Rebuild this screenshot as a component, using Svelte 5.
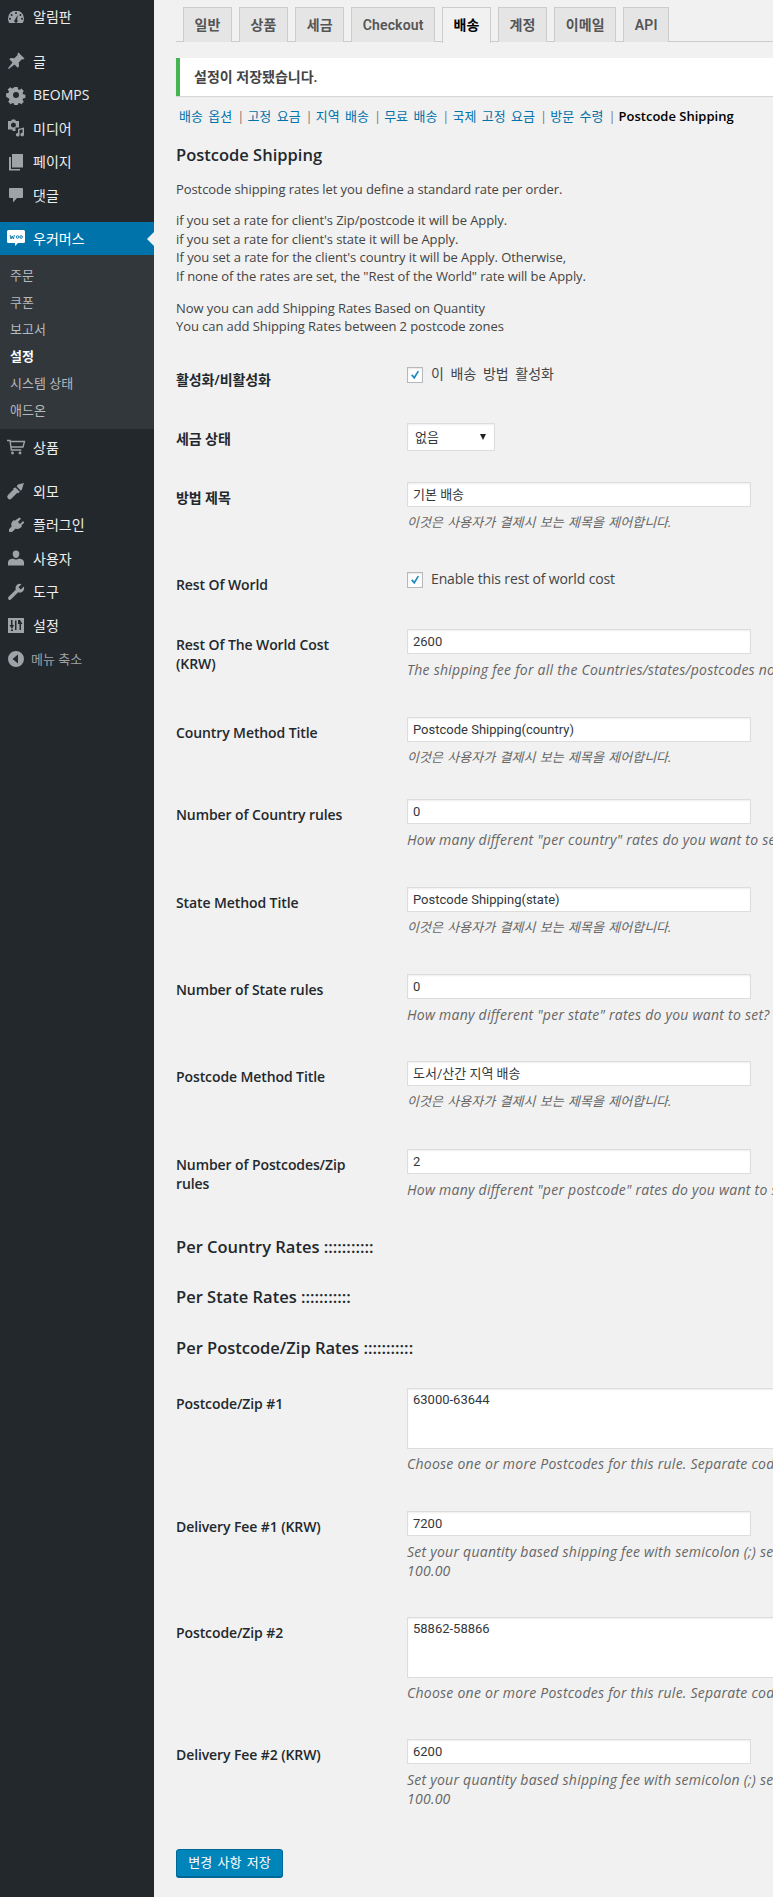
<script lang="ts">
	const tabs = ['일반', '상품', '세금', 'Checkout', '배송', '계정', '이메일', 'API'];
	const sections = ['배송 옵션', '고정 요금', '지역 배송', '무료 배송', '국제 고정 요금', '방문 수령'];
	const submenu = ['주문', '쿠폰', '보고서', '설정', '시스템 상태', '애드온'];

	const titleDesc = '이것은 사용자가 결제시 보는 제목을 제어합니다.';
	const codesDesc = 'Choose one or more Postcodes for this rule. Separate codes with a comma';
	const feeDesc = 'Set your quantity based shipping fee with semicolon (;) separated values';

	const topRows = [
		{ label: '활성화/비활성화', kind: 'check', ko: true, text: '이 배송 방법 활성화', pad: 'p34' },
		{ label: '세금 상태', kind: 'select', value: '없음', pad: 'p31' },
		{ label: '방법 제목', kind: 'input', value: '기본 배송', desc: titleDesc, pad: 'p40' },
		{ label: 'Rest Of World', kind: 'check', text: 'Enable this rest of world cost', pad: 'p35' },
		{ label: 'Rest Of The World Cost (KRW)', kind: 'input', value: '2600', desc: 'The shipping fee for all the Countries/states/postcodes not defined', pad: 'p38' },
		{ label: 'Country Method Title', kind: 'input', value: 'Postcode Shipping(country)', desc: titleDesc, pad: 'p32' },
		{ label: 'Number of Country rules', kind: 'input', value: '0', desc: 'How many different "per country" rates do you want to set?', pad: 'p38' },
		{ label: 'State Method Title', kind: 'input', value: 'Postcode Shipping(state)', desc: titleDesc, pad: 'p37' },
		{ label: 'Number of State rules', kind: 'input', value: '0', desc: 'How many different "per state" rates do you want to set?', pad: 'p37' },
		{ label: 'Postcode Method Title', kind: 'input', value: '도서/산간 지역 배송', desc: titleDesc, pad: 'p38' },
		{ label: 'Number of Postcodes/Zip rules', kind: 'input', value: '2', desc: 'How many different "per postcode" rates do you want to set?', pad: 'p38' }
	];

	const zipRows = [
		{ label: 'Postcode/Zip #1', kind: 'area', value: '63000-63644', desc: codesDesc, pad: 'p38' },
		{ label: 'Delivery Fee #1 (KRW)', kind: 'input', value: '7200', desc: feeDesc, wrapped: '100.00', pad: 'p37' },
		{ label: 'Postcode/Zip #2', kind: 'area', value: '58862-58866', desc: codesDesc, pad: 'p37' },
		{ label: 'Delivery Fee #2 (KRW)', kind: 'input', value: '6200', desc: feeDesc, wrapped: '100.00', pad: 'p41' }
	];
</script>

{#snippet icon(name)}
	<svg class="ico" viewBox="0 0 20 20" aria-hidden="true">
		{#if name === 'dashboard'}
			<path d="M10 3.500a8 8 0 0 0-8 8c0 1.600.5 3.200 1.300 4.400h13.400a8 8 0 0 0 1.300-4.400 8 8 0 0 0-8-8zm0 1.600a1 1 0 1 1 0 2 1 1 0 0 1 0-2zM5.600 7a1 1 0 1 1 0 2 1 1 0 0 1 0-2zm8.800 0a1 1 0 1 1 0 2 1 1 0 0 1 0-2zM4 10.800a1 1 0 1 1 0 2 1 1 0 0 1 0-2zm12 0a1 1 0 1 1 0 2 1 1 0 0 1 0-2zM11.700 8l-.6 4.700a1.700 1.700 0 1 1-2.200 0z" fill-rule="evenodd"/>
		{:else if name === 'pin'}
			<path d="M12.500 1.500l6 6-1.300 1.100-1.300-.3-3.200 3.300.3 3.800-1.300 1.300-3.200-3.200L2.800 18l-.8-.8 4.500-5.700-3.200-3.200L4.600 7l3.800.3 3.300-3.200-.3-1.300z"/>
		{:else if name === 'gear'}
			<path fill-rule="evenodd" d="M8.300 2h3.400l.4 2.300 1.300.6 2-1.300 2.400 2.400-1.300 2 .6 1.300 2.300.4v3.400l-2.300.4-.6 1.300 1.300 2-2.400 2.400-2-1.300-1.300.6-.4 2.300H8.300l-.4-2.300-1.300-.6-2 1.300-2.400-2.400 1.300-2-.6-1.300L.1 11.700V8.300l2.300-.4.6-1.300-1.300-2L4.100 2.200l2 1.300 1.300-.6zM10 7a3 3 0 1 0 0 6 3 3 0 0 0 0-6z"/>
		{:else if name === 'media'}
			<path fill-rule="evenodd" d="M2 3h3l1-1.500h3L10 3h3v6.500H9.500V13H6.500v-1.500H2zM7.500 4.500a2.500 2.500 0 1 0 0 5 2.500 2.500 0 0 0 0-5z"/>
			<path d="M12 11l6-1.500v7a1.800 1.800 0 1 1-1.500-1.700v-3.500l-3 .8v4.600a1.800 1.800 0 1 1-1.500-1.700z"/>
		{:else if name === 'page'}
			<path d="M6 2h11v13.500H6z"/><path d="M3 5h2v12h9v1.500H3z"/>
		{:else if name === 'comment'}
			<path d="M4 3h12a1 1 0 0 1 1 1v8a1 1 0 0 1-1 1h-5l-4 4.500V13H4a1 1 0 0 1-1-1V4a1 1 0 0 1 1-1z"/>
		{:else if name === 'cart'}
			<path fill="none" stroke="currentColor" stroke-width="1.400" d="M1 3.500h3l1.300 9.500h10M4.500 4.500h14l-1.500 5.500H5.200"/>
			<circle cx="6.500" cy="16" r="1.400"/><circle cx="14" cy="16" r="1.400"/>
		{:else if name === 'brush'}
			<path d="M12 3.500c2-.5 4-1 6-1.500-1 2.500-1.500 4.500-2 6.500l-1.200 1.200-4.200-4.500zM9.500 6.500l4.300 4.300-1.500 1.500-1-.5-5.800 5.700a1.500 1.500 0 0 1-3.500-3.500l5.700-5.800-.5-1z"/>
		{:else if name === 'plug'}
			<path d="M13.500 2.500l1.500 1.300-3 3.200 2 2 3-3 1.300 1.500-3 3 .8.800-1.300 1.300c-1.500 1.500-3.500 1.800-5 .8L6 17H3.500L3 16.500v-2.300l2.800-3c-1-1.500-.7-3.500.8-5L7.900 4.900l.8.800z"/>
		{:else if name === 'user'}
			<path d="M10 2.500a3.300 3.300 0 0 1 3.300 3.500c0 2-1.300 4-3.300 4S6.700 8 6.700 6A3.300 3.300 0 0 1 10 2.500zM7 10.500c.8.700 1.900 1 3 1s2.200-.3 3-1c2.500.3 5 1.500 5 3.500v3.500H2V14c0-2 2.500-3.200 5-3.500z"/>
		{:else if name === 'wrench'}
			<path d="M17.800 4.500c.7 1.600.4 3.500-.9 4.800a4.400 4.400 0 0 1-4.700 1l-7.300 7.300a1.800 1.800 0 0 1-2.500-2.500l7.300-7.300a4.400 4.400 0 0 1 5.800-5.600l-3 3 2.300 2.300z"/>
		{:else if name === 'sliders'}
			<path fill-rule="evenodd" d="M2 3h16v15H2zM5 5v5H3.500L6 14l2-4H6.500V5zm7 0v4h1.500v6H15V9h1.500L14 5zM9 5.500V15h1.500V5.500zM5 14.500V16h2v-1.500z"/>
		{:else if name === 'collapse'}
			<path fill-rule="evenodd" d="M10 2a8 8 0 1 1 0 16 8 8 0 0 1 0-16zm2 3.500L6.500 10l5.500 4.500z"/>
		{/if}
	</svg>
{/snippet}

{#snippet row(r)}
	<div class="row {r.pad}">
		<div class="label" class:check-label={r.kind === 'check'}>{r.label}</div>
		<div class="field">
			{#if r.kind === 'check'}
				<label class="check" class:ko={r.ko}>
					<span class="box">
						<svg viewBox="0 0 16 16" aria-hidden="true"><path d="M3.500 8.500l1.500-1.300 2 2.300 4-6.500 1.600 1L7.300 12.800z"/></svg>
					</span>
					{r.text}
				</label>
			{:else if r.kind === 'select'}
				<div class="select">{r.value}<span class="caret"></span></div>
			{:else if r.kind === 'area'}
				<div class="area">{r.value}</div>
			{:else}
				<div class="input">{r.value}</div>
			{/if}
			{#if r.desc}
				<p class="desc" class:ko={r.desc === titleDesc} class:tight={r.kind === 'area'}>{r.desc}{#if r.wrapped}<br />{r.wrapped}{/if}</p>
			{/if}
		</div>
	</div>
{/snippet}

<div class="admin">
	<nav class="menu">
		<a class="item">{@render icon('dashboard')}알림판</a>
		<div class="sep"></div>
		<a class="item">{@render icon('pin')}글</a>
		<a class="item">{@render icon('gear')}BEOMPS</a>
		<a class="item">{@render icon('media')}미디어</a>
		<a class="item">{@render icon('page')}페이지</a>
		<a class="item">{@render icon('comment')}댓글</a>
		<div class="sep short"></div>
		<a class="item current">
			<svg class="ico woo" viewBox="0 0 20 20" aria-hidden="true">
				<path d="M2.500 2h15A1.500 1.500 0 0 1 19 3.500v10a1.500 1.500 0 0 1-1.500 1.500H12l-3 3v-3H2.500A1.500 1.500 0 0 1 1 13.500v-10A1.500 1.500 0 0 1 2.500 2z" />
				<path class="woo-mark" d="M4 7l1 4 1.200-3 1.200 3 1-4M10.300 9a1.300 1.300 0 1 0 2.600 0 1.300 1.300 0 1 0-2.600 0M13.800 9a1.300 1.300 0 1 0 2.600 0 1.300 1.300 0 1 0-2.600 0" />
			</svg>
			우커머스
		</a>
		<div class="sub">
			{#each submenu as s}
				<a class:on={s === '설정'}>{s}</a>
			{/each}
		</div>
		<div class="sep tiny"></div>
		<a class="item">{@render icon('cart')}상품</a>
		<div class="sep wide"></div>
		<a class="item">{@render icon('brush')}외모</a>
		<a class="item">{@render icon('plug')}플러그인</a>
		<a class="item">{@render icon('user')}사용자</a>
		<a class="item">{@render icon('wrench')}도구</a>
		<a class="item">{@render icon('sliders')}설정</a>
		<a class="item collapse">{@render icon('collapse')}메뉴 축소</a>
	</nav>

	<main class="content">
		<div class="tabs">
			{#each tabs as t}
				<a class="tab" class:active={t === '배송'}>{t}</a>
			{/each}
		</div>

		<div class="notice">설정이 저장됐습니다.</div>

		<div class="subnav">
			{#each sections as s}
				<a>{s}</a><span class="bar">|</span>
			{/each}
			<strong>Postcode Shipping</strong>
		</div>

		<h2>Postcode Shipping</h2>
		<p class="intro first">Postcode shipping rates let you define a standard rate per order.</p>
		<p class="intro">
			if you set a rate for client's Zip/postcode it will be Apply.<br />
			if you set a rate for client's state it will be Apply.<br />
			If you set a rate for the client's country it will be Apply. Otherwise,<br />
			If none of the rates are set, the "Rest of the World" rate will be Apply.
		</p>
		<p class="intro">
			Now you can add Shipping Rates Based on Quantity<br />
			You can add Shipping Rates between 2 postcode zones
		</p>

		<div class="rows">
			{#each topRows as r}
				{@render row(r)}
			{/each}
		</div>

		<h3>Per Country Rates :::::::::::</h3>
		<h3>Per State Rates :::::::::::</h3>
		<h3>Per Postcode/Zip Rates :::::::::::</h3>

		{#each zipRows as r}
			{@render row(r)}
		{/each}

		<button class="save">변경 사항 저장</button>
	</main>
</div>

<style>
	:global(body) {
		background: #f1f1f1;
	}

	.admin {
		display: flex;
		width: 773px;
		height: 1897px;
		overflow: hidden;
		background: #f1f1f1;
		color: #444;
		font-family: 'Open Sans', 'Noto Sans CJK KR', sans-serif;
		font-size: 13px;
		line-height: 18.6px;
	}

	.menu {
		flex: none;
		width: 154px;
		background: #23282d;
		color: #eee;
		font-size: 14px;
	}

	.item {
		display: flex;
		align-items: center;
		box-sizing: border-box;
		height: 33.5px;
		padding: 1.5px 0 0 6px;
	}

	.ico {
		flex: none;
		width: 20px;
		height: 20px;
		margin: -1.5px 7px 0 0;
		fill: #9ea3a8;
		color: #9ea3a8;
	}

	.sep {
		height: 11px;
	}

	.sep.short {
		height: 9.5px;
	}

	.sep.tiny {
		height: 2px;
	}

	.sep.wide {
		height: 10.5px;
	}

	.current {
		position: relative;
		background: #0073aa;
		color: #fff;
	}

	.current::after {
		content: '';
		position: absolute;
		right: 0;
		top: 10px;
		border: 7px solid transparent;
		border-right-color: #f1f1f1;
		border-left: 0;
	}

	.woo {
		fill: #fff;
	}

	.woo-mark {
		fill: none;
		stroke: #0073aa;
		stroke-width: 0.9;
	}

	.sub {
		padding: 7px 0 4.5px;
		background: #32373c;
		font-size: 13px;
		color: #b4b9be;
	}

	.sub a {
		display: block;
		height: 27px;
		line-height: 27px;
		padding-left: 10px;
	}

	.sub a.on {
		color: #fff;
		font-weight: 700;
	}

	.collapse {
		color: #9ea3a8;
		font-size: 13px;
	}

	.collapse .ico {
		margin-right: 5px;
	}

	.content {
		flex: none;
		width: 960px;
		padding: 7px 0 0 22px;
		box-sizing: border-box;
	}

	.tabs {
		display: flex;
		gap: 7px;
		height: 35px;
		box-sizing: border-box;
		padding-left: 7px;
		border-bottom: 1px solid #ccc;
	}

	.tab {
		height: 34px;
		padding: 0 10.5px;
		border: 1px solid #ccc;
		border-bottom: 0;
		background: #e5e5e5;
		color: #555;
		font-family: Roboto, 'Noto Sans CJK KR', sans-serif;
		font-size: 14px;
		font-weight: 600;
		letter-spacing: 0.15px;
		line-height: 34px;
	}

	.tab.active {
		height: 35px;
		background: #f1f1f1;
		color: #000;
	}

	.notice {
		height: 38px;
		margin-top: 16px;
		padding-left: 14px;
		border-left: 4px solid #46b450;
		background: #fff;
		box-shadow: 0 1px 1px rgba(0, 0, 0, 0.1);
		color: #444;
		font-size: 14px;
		font-weight: 600;
		line-height: 38px;
	}

	.subnav {
		display: flex;
		margin: 11px 0 0 3px;
		color: #777;
		word-spacing: 2px;
	}

	.subnav a {
		color: #0073aa;
	}

	.subnav .bar {
		margin: 0 3px 0 5px;
	}

	.subnav strong {
		color: #000;
		font-weight: 600;
		word-spacing: 0;
	}

	h2 {
		margin: 18px 0 0;
		color: #23282d;
		font-size: 16.5px;
		font-weight: 600;
		line-height: 22px;
	}

	.intro {
		margin: 13px 0 0;
		letter-spacing: -0.08px;
		line-height: 18.6px;
	}

	.intro.first {
		margin-top: 14px;
	}

	.rows {
		margin-top: 31px;
	}

	.row {
		display: grid;
		grid-template-columns: 231px 1fr;
	}

	.p31 { padding-bottom: 31px; }
	.p32 { padding-bottom: 32px; }
	.p34 { padding-bottom: 34px; }
	.p35 { padding-bottom: 35px; }
	.p37 { padding-bottom: 37px; }
	.p38 { padding-bottom: 38px; }
	.p40 { padding-bottom: 40px; }
	.p41 { padding-bottom: 41px; }

	.label {
		width: 190px;
		padding-top: 6px;
		color: #23282d;
		font-size: 14px;
		font-weight: 600;
		letter-spacing: -0.1px;
		line-height: 19px;
	}

	.label.check-label {
		padding-top: 3px;
	}

	.check {
		display: flex;
		align-items: center;
		gap: 8px;
		height: 16px;
		font-size: 14px;
		letter-spacing: -0.15px;
	}

	.check.ko {
		letter-spacing: 0;
		word-spacing: 3px;
	}

	.box {
		flex: none;
		width: 16px;
		height: 16px;
		box-sizing: border-box;
		border: 1px solid #b4b9be;
		background: #fff;
		box-shadow: inset 0 1px 2px rgba(0, 0, 0, 0.1);
	}

	.box svg {
		display: block;
		width: 14px;
		height: 14px;
		fill: #1e8cbe;
	}

	.select {
		position: relative;
		width: 88px;
		height: 28px;
		box-sizing: border-box;
		padding-left: 7px;
		border: 1px solid #ddd;
		background: #fff;
		box-shadow: inset 0 1px 2px rgba(0, 0, 0, 0.07);
		color: #32373c;
		line-height: 26px;
	}

	.caret {
		position: absolute;
		right: 8px;
		top: 10px;
		border: 3px solid transparent;
		border-top: 6px solid #222;
		border-bottom: 0;
	}

	.input,
	.area {
		box-sizing: border-box;
		border: 1px solid #ddd;
		background: #fff;
		box-shadow: inset 0 1px 2px rgba(0, 0, 0, 0.07);
		color: #32373c;
		font-family: Roboto, 'Noto Sans CJK KR', sans-serif;
		padding: 0 5px;
	}

	.input {
		width: 344px;
		height: 25px;
		line-height: 23px;
	}

	.area {
		width: 400px;
		height: 61px;
		padding-top: 2px;
	}

	.desc {
		margin: 6px 0 0;
		color: #666;
		font-size: 14px;
		font-style: italic;
		letter-spacing: 0.25px;
		line-height: 19px;
	}

	.desc.ko {
		font-size: 13px;
		letter-spacing: 0;
		word-spacing: 1px;
	}

	.desc.tight {
		margin-top: 5px;
	}

	h3 {
		margin: 0 0 30.5px;
		color: #23282d;
		font-size: 16.5px;
		font-weight: 600;
		line-height: 20px;
	}

	.save {
		display: block;
		width: 107px;
		height: 28px;
		padding: 0 0 1px;
		border: 1px solid #006799;
		border-radius: 3px;
		background: #0085ba;
		box-shadow: 0 1px 0 #006799;
		color: #fff;
		font: inherit;
		word-spacing: 2px;
	}
</style>
